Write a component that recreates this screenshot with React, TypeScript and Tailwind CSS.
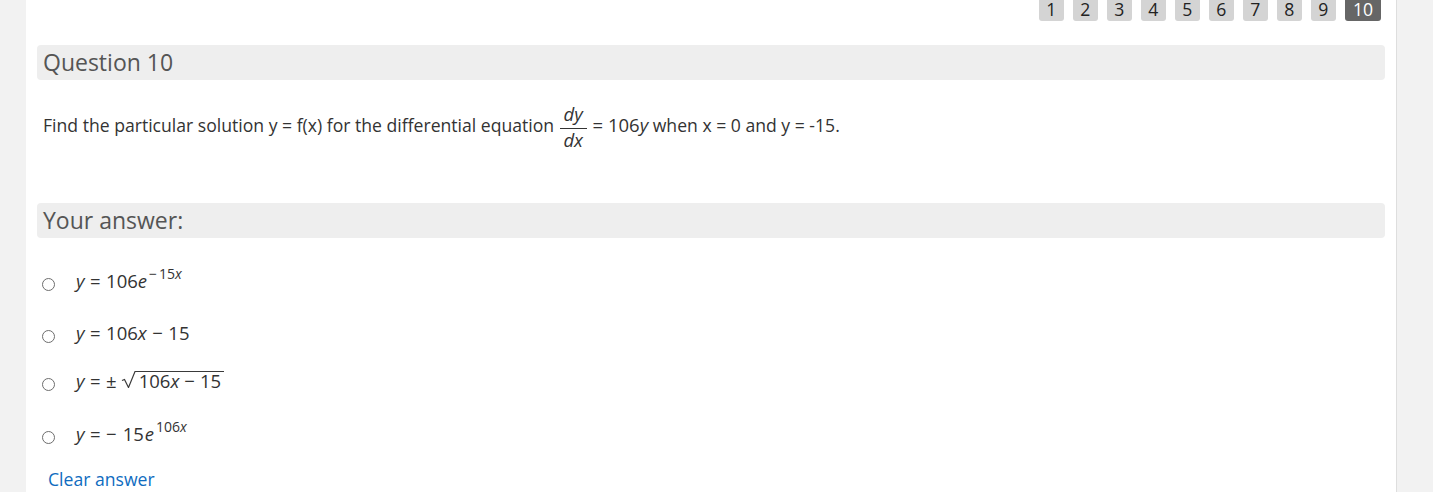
import type { ReactNode } from "react";

const pages = ["1", "2", "3", "4", "5", "6", "7", "8", "9", "10"];

function V({ children }: { children: ReactNode }) {
  return <span className="italic">{children}</span>;
}

function Op({ children }: { children: ReactNode }) {
  return <span className="mx-[5.5px]">{children}</span>;
}

function Sup({ children }: { children: ReactNode }) {
  return (
    <span className="relative -top-[9px] ml-[2px] text-[14px] leading-none">
      {children}
    </span>
  );
}

function Radical() {
  return (
    <svg
      width="16"
      height="18"
      viewBox="0 0 16 18"
      className="inline-block align-baseline"
      aria-hidden
    >
      <path
        d="M1 10.5 L3.5 9.5 L7.5 17.5 L14 1.5 L16 1.5"
        fill="none"
        stroke="#3a3a3a"
        strokeWidth="1.2"
      />
    </svg>
  );
}

function RadioDot() {
  return (
    <span className="inline-block h-[13px] w-[13px] shrink-0 translate-y-[3px] rounded-full border border-[#6d6d6d] bg-white" />
  );
}

const options: { key: string; mt: string; body: ReactNode }[] = [
  {
    key: "a",
    mt: "mt-[31px]",
    body: (
      <>
        <V>y</V>
        <Op>=</Op>106<V>e</V>
        <Sup>
          <span className="mr-[2px]">−</span>15<V>x</V>
        </Sup>
      </>
    ),
  },
  {
    key: "b",
    mt: "mt-[28px]",
    body: (
      <>
        <V>y</V>
        <Op>=</Op>106<V>x</V>
        <Op>−</Op>15
      </>
    ),
  },
  {
    key: "c",
    mt: "mt-[24px]",
    body: (
      <>
        <V>y</V>
        <Op>=</Op>
        <span className="mr-[4px]">±</span>
        <Radical />
        <span className="inline-block border-t border-[#3a3a3a] pl-[2px] pr-[3px] leading-[18px]">
          106<V>x</V>
          <span className="mx-[5px]">−</span>15
        </span>
      </>
    ),
  },
  {
    key: "d",
    mt: "mt-[29px]",
    body: (
      <>
        <V>y</V>
        <Op>=</Op>
        <span className="mr-[6px]">−</span>15
        <span className="ml-[1px] italic">e</span>
        <Sup>
          106<V>x</V>
        </Sup>
      </>
    ),
  },
];

export default function App() {
  return (
    <div className="min-h-screen bg-[#f2f2f2] font-['Open_Sans',sans-serif]">
      <div className="ml-[26px] w-[1371px] border-r border-[#dedede] bg-white px-[11px] pb-10">
        {/* question navigation */}
        <div className="flex justify-end gap-[9px] pr-[4px]">
          {pages.map((p) => (
            <span
              key={p}
              className={
                p === "10"
                  ? "h-[21px] rounded-b-[3px] bg-[#666666] px-[8px] text-center text-[17.6px] leading-[18px] text-white"
                  : "h-[21px] w-[25px] rounded-b-[3px] bg-[#d4d4d4] text-center text-[17.6px] leading-[18px] text-[#222]"
              }
            >
              {p}
            </span>
          ))}
        </div>

        <h2 className="mt-[24px] h-[35px] rounded-[4px] bg-[#eeeeee] px-[6px] text-[23px] leading-[35px] text-[#555]">
          Question 10
        </h2>

        <p className="mt-[27px] px-[6px] text-[17.6px] leading-[26.4px] text-[#333]">
          Find the particular solution y = f(x) for the differential equation{" "}
          <span className="mx-[1px] inline-flex flex-col items-center align-middle text-[18.5px]">
            <span className="px-[3px] pb-[7px] leading-[14px]">
              <V>d</V>
              <V>y</V>
            </span>
            <span className="h-px w-[27px] bg-[#333]" />
            <span className="px-[3px] pt-[2px] leading-[17px]">
              <V>d</V>
              <V>x</V>
            </span>
          </span>
          <span className="text-[18.5px]">
            {" "}= 106<V>y</V>
          </span>{" "}
          when x = 0 and y = -15.
        </p>

        <h3 className="mt-[55px] h-[35px] rounded-[4px] bg-[#eeeeee] px-[6px] text-[23px] leading-[35px] text-[#555]">
          Your answer:
        </h3>

        <div className="pl-[5px]">
          {options.map((o) => (
            <label key={o.key} className={`flex items-baseline ${o.mt}`}>
              <RadioDot />
              <span className="ml-[21px] text-[18.5px] leading-[24px] text-[#333]">
                {o.body}
              </span>
            </label>
          ))}
        </div>

        <a className="mt-[20px] ml-[11px] block text-[17.6px] leading-[26px] text-[#0f6cbf]">
          Clear answer
        </a>
      </div>
    </div>
  );
}
